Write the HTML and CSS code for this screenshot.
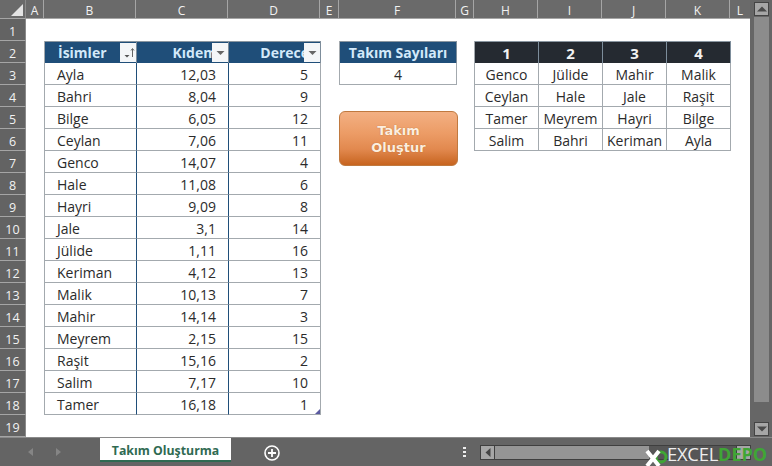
FILE: index.html
```html
<!DOCTYPE html>
<html lang="tr">
<head>
<meta charset="utf-8">
<title>Takım Oluşturma</title>
<link rel="stylesheet" href="styles.css">
</head>
<body>
<div class="app">
  <div class="main">
    <div class="sheet">
      <div class="corner"><span class="corner-tri"></span></div>
      <div class="ch">A</div><div class="ch">B</div><div class="ch">C</div><div class="ch">D</div><div class="ch">E</div><div class="ch">F</div><div class="ch">G</div><div class="ch">H</div><div class="ch">I</div><div class="ch">J</div><div class="ch">K</div><div class="ch">L</div>
      <div class="rows">
        <div class="rh">1</div><div class="rh">2</div><div class="rh">3</div><div class="rh">4</div><div class="rh">5</div><div class="rh">6</div><div class="rh">7</div><div class="rh">8</div><div class="rh">9</div><div class="rh">10</div><div class="rh">11</div><div class="rh">12</div><div class="rh">13</div><div class="rh">14</div><div class="rh">15</div><div class="rh">16</div><div class="rh">17</div><div class="rh">18</div><div class="rh">19</div>
      </div>

      <div class="tbl t-main">
        <div class="th th-l">İsimler<span class="fbtn sorted"><svg width="15" height="17" viewBox="0 0 15 17"><path d="M3.5 11h5L6 13.5z" fill="#555"/><path d="M11.5 13V5M10 6.5l1.5-2 1.5 2" stroke="#666" fill="none"/></svg></span></div>
        <div class="th th-r">Kıdem<span class="fbtn"><svg width="15" height="17" viewBox="0 0 15 17"><path d="M3.5 7h8l-4 4z" fill="#666"/></svg></span></div>
        <div class="th th-r">Derece<span class="fbtn"><svg width="15" height="17" viewBox="0 0 15 17"><path d="M3.5 7h8l-4 4z" fill="#666"/></svg></span></div>
        <div class="td l">Ayla</div><div class="td r">12,03</div><div class="td r">5</div>
        <div class="td l">Bahri</div><div class="td r">8,04</div><div class="td r">9</div>
        <div class="td l">Bilge</div><div class="td r">6,05</div><div class="td r">12</div>
        <div class="td l">Ceylan</div><div class="td r">7,06</div><div class="td r">11</div>
        <div class="td l">Genco</div><div class="td r">14,07</div><div class="td r">4</div>
        <div class="td l">Hale</div><div class="td r">11,08</div><div class="td r">6</div>
        <div class="td l">Hayri</div><div class="td r">9,09</div><div class="td r">8</div>
        <div class="td l">Jale</div><div class="td r">3,1</div><div class="td r">14</div>
        <div class="td l">Jülide</div><div class="td r">1,11</div><div class="td r">16</div>
        <div class="td l">Keriman</div><div class="td r">4,12</div><div class="td r">13</div>
        <div class="td l">Malik</div><div class="td r">10,13</div><div class="td r">7</div>
        <div class="td l">Mahir</div><div class="td r">14,14</div><div class="td r">3</div>
        <div class="td l">Meyrem</div><div class="td r">2,15</div><div class="td r">15</div>
        <div class="td l">Raşit</div><div class="td r">15,16</div><div class="td r">2</div>
        <div class="td l">Salim</div><div class="td r">7,17</div><div class="td r">10</div>
        <div class="td l">Tamer</div><div class="td r">16,18</div><div class="td r">1<span class="resize"></span></div>
      </div>

      <div class="tbl t-count">
        <div class="th c">Takım Sayıları</div>
        <div class="td c">4</div>
      </div>

      <div class="tbl t-teams">
        <div class="th c dark">1</div><div class="th c dark">2</div><div class="th c dark">3</div><div class="th c dark">4</div>
        <div class="td c">Genco</div><div class="td c">Jülide</div><div class="td c">Mahir</div><div class="td c">Malik</div>
        <div class="td c">Ceylan</div><div class="td c">Hale</div><div class="td c">Jale</div><div class="td c">Raşit</div>
        <div class="td c">Tamer</div><div class="td c">Meyrem</div><div class="td c">Hayri</div><div class="td c">Bilge</div>
        <div class="td c">Salim</div><div class="td c">Bahri</div><div class="td c">Keriman</div><div class="td c">Ayla</div>
      </div>

      <button class="make" type="button">Takım<br>Oluştur</button>
    </div>

    <div class="vscroll">
      <span class="sbtn"><svg width="10" height="6" viewBox="0 0 10 6"><path d="M0 5.5h10L5 .5z" fill="#4a4a4a"/></svg></span>
      <span class="vtrack"></span>
      <span class="sbtn"><svg width="10" height="6" viewBox="0 0 10 6"><path d="M0 .5h10L5 5.5z" fill="#4a4a4a"/></svg></span>
    </div>
  </div>

  <div class="bottom">
    <div class="tabnav">
      <svg width="7" height="8" viewBox="0 0 7 8"><path d="M6 0v8L1 4z" fill="#858585"/></svg>
      <svg width="7" height="8" viewBox="0 0 7 8"><path d="M1 0v8l5-4z" fill="#858585"/></svg>
    </div>
    <div class="tab">Takım Oluşturma</div>
    <div class="addwrap">
      <svg class="add" width="18" height="18" viewBox="0 0 18 18"><circle cx="9" cy="9" r="7" fill="none" stroke="#fff" stroke-width="1.6"/><path d="M9 5v8M5 9h8" stroke="#fff" stroke-width="1.8"/></svg>
    </div>
    <div class="dots"><i></i><i></i><i></i></div>
    <div class="hscroll">
      <span class="hbtn"><svg width="6" height="9" viewBox="0 0 6 9"><path d="M5.5 0v9L.5 4.5z" fill="#444"/></svg></span>
      <span class="htrack"></span>
      <span class="hbtn rbtn"></span>
    </div>
  </div>
  <div class="wm"><svg class="wm-x" width="24" height="17" viewBox="0 0 24 17"><circle cx="17" cy="8" r="5" fill="none" stroke="#3fa535" stroke-width="3"/><path d="M3 2l12 15M15 2L3 17" stroke="#fff" stroke-width="4"/></svg><span class="wm-a">EXCEL</span><span class="wm-b">DEPO</span></div>
</div>
</body>
</html>
```

FILE: styles.css
```css
* { box-sizing: border-box; }
html, body { margin: 0; padding: 0; }
body { width: 772px; height: 466px; overflow: hidden; background: #fff; font-family: "Open Sans", "Liberation Sans", sans-serif; }
.app { position: relative; width: 772px; height: 466px; display: flex; flex-direction: column; overflow: hidden; }
.main { display: flex; height: 437px; }

.sheet {
  position: relative;
  width: 750px;
  display: grid;
  grid-template-columns: 26px 18px 92px 92px 92px 19px 117px 18px 64px 64px 64px 64px 20px;
  grid-template-rows: 19px 22px repeat(18, 22px);
  background: #fff;
}
.corner { grid-column: 1; grid-row: 1; background: #6a6a6a; border-right: 1px solid #8a8a8a; border-bottom: 1px solid #a5a5a5; position: relative; }
.corner-tri { position: absolute; right: 2px; bottom: 2px; width: 0; height: 0; border-style: solid; border-width: 0 0 12px 12px; border-color: transparent transparent #e4e4e4 transparent; }
.ch { grid-row: 1; background: #6a6a6a; color: #f2f2f2; font-size: 12px; line-height: 21px; text-align: center; border-right: 1px solid #a5a5a5; border-bottom: 1px solid #a5a5a5; }
.ch:nth-child(13) { border-right: 0; }

.rows { grid-column: 1; grid-row: 2 / 21; display: grid; grid-template-rows: repeat(19, 22px); }
.rh { background: #636363; color: #f2f2f2; font-size: 12.5px; line-height: 25px; text-align: center; border-bottom: 1px solid #a5a5a5; border-right: 1px solid #8a8a8a; }

.tbl { display: grid; grid-auto-rows: 22px; font-size: 14px; color: #2b2b2b; border-left: 1px solid #a3a9ae; }
.t-main { grid-column: 3 / 6; grid-row: 3 / 20; grid-template-columns: 92px 92px 92px; }
.t-count { grid-column: 7; grid-row: 3 / 5; grid-template-columns: 117px; }
.t-teams { grid-column: 9 / 13; grid-row: 3 / 8; grid-template-columns: repeat(4, 64px); }

.th { position: relative; background: #1f4e79; color: #d3e9fa; font-weight: 700; font-size: 14px; line-height: 22px; border-top: 1px solid #8a96a0; border-right: 1px solid #7d8d9b; white-space: nowrap; overflow: hidden; }
.th-l { padding-left: 13px; }
.th-r { text-align: right; padding-right: 11px; }
.th.c { text-align: center; }
.th.dark { background: #252a31; color: #f2f2f2; font-size: 15px; }
.td { position: relative; background: #fff; line-height: 23px; border-bottom: 1px solid #a3a9ae; border-right: 1px solid #a3a9ae; white-space: nowrap; }
.td.l { padding-left: 12px; border-right-color: #1f4e79; }
.td.r { text-align: right; padding-right: 12px; }
.td.r:nth-child(3n+2) { border-right-color: #1f4e79; }
.td.c { text-align: center; }

.fbtn { position: absolute; right: 0; top: 1px; width: 16px; height: 19px; background: #f4f6f8; display: flex; align-items: center; justify-content: center; }
.resize { position: absolute; right: 0; bottom: 0; width: 0; height: 0; border-style: solid; border-width: 0 0 5px 5px; border-color: transparent transparent #5a5aa0 transparent; }

.make {
  position: absolute; left: 339px; top: 111px; width: 119px; height: 55px; padding: 0;
  border: 1px solid #c0793f; border-radius: 6px;
  background: linear-gradient(#f3b083 0%, #ec9c66 40%, #e2894f 70%, #c7641f 100%);
  color: #fdeedf; font-family: "DejaVu Sans", sans-serif; font-weight: 700; font-size: 13px; line-height: 17px;
  text-shadow: 0 0 1px #a8622d;
}

.vscroll { width: 22px; background: #666; display: flex; flex-direction: column; padding: 2px 3px 1px 4px; }
.sbtn { height: 14px; background: #a6a6a6; border: 1px solid #444; display: flex; align-items: center; justify-content: center; flex: none; }
.vtrack { flex: 1; background: #8c8c8c; margin: 1px 0 20px; }

.bottom { position: relative; height: 29px; background: #646464; display: flex; align-items: flex-start; border-top: 1px solid #8a8a8a; }
.tabnav { width: 100px; display: flex; gap: 21px; padding: 10px 0 0 27px; }
.tab { width: 131px; height: 24px; background: #fff; color: #2f6a52; font-size: 12.3px; font-weight: 700; line-height: 26px; text-align: center; border-bottom: 2px solid #2f6a52; white-space: nowrap; }
.addwrap { width: 80px; padding: 6px 0 0 32px; }
.add { display: block; }
.dots { margin: 9px 0 0 152px; display: flex; flex-direction: column; gap: 2px; }
.dots i { display: block; width: 3px; height: 2px; background: #eee; }
.hscroll { position: absolute; left: 480px; top: 7px; width: 271px; height: 15px; display: flex; background: #565656; border: 1px solid #3f3f3f; }
.hbtn { width: 14px; background: #a6a6a6; border-right: 1px solid #3f3f3f; display: flex; align-items: center; justify-content: center; }
.rbtn { border-left: 1px solid #3f3f3f; border-right: 0; margin-left: auto; }
.htrack { width: 154px; background: #959595; }

.wm { position: absolute; left: 644px; top: 442px; height: 24px; display: flex; align-items: flex-end; font-family: "Open Sans", sans-serif; font-size: 18.5px; line-height: 24px; }
.wm-x { flex: none; margin-right: -1px; }
.wm-a { color: #eee; letter-spacing: -0.3px; }
.wm-b { color: #3fa535; font-size: 18px; font-weight: 700; }
```
